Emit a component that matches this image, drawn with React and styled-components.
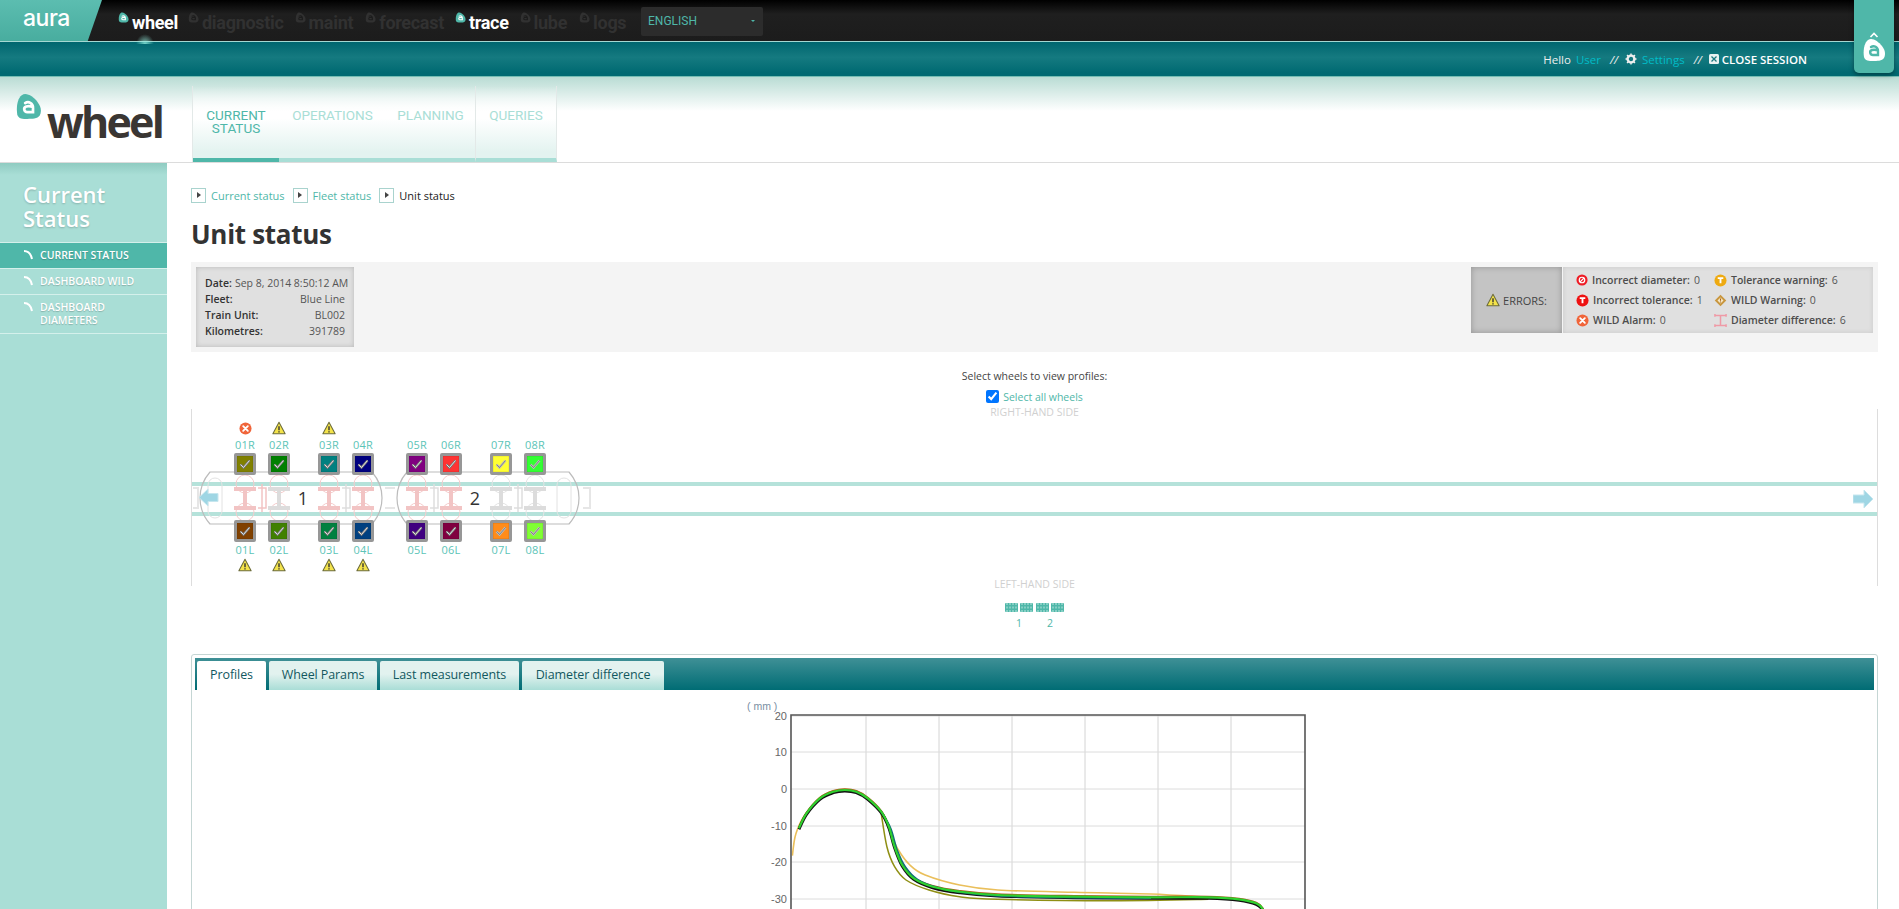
import React from 'react'
import styled, { createGlobalStyle } from 'styled-components'

const TEAL = '#4fb7a9'
const PALE = '#a9ded6'
const NARROW = '"Liberation Sans Narrow", Roboto, sans-serif'

const PRODUCTS = [
  { name: 'wheel', on: true, gap: 0 },
  { name: 'diagnostic', gap: 10 },
  { name: 'maint', gap: 11 },
  { name: 'forecast', gap: 12 },
  { name: 'trace', on: true, gap: 11 },
  { name: 'lube', gap: 11 },
  { name: 'logs', gap: 12 }
]

const TOP_WHEELS = [
  { id: '01R', color: '#808000', gap: 0, flag: 'alarm' },
  { id: '02R', color: '#008000', gap: 0, flag: 'warn' },
  { id: '03R', color: '#008080', gap: 16, flag: 'warn' },
  { id: '04R', color: '#000080', gap: 0 },
  { id: '05R', color: '#800080', gap: 20 },
  { id: '06R', color: '#ff3333', gap: 0 },
  { id: '07R', color: '#ffff33', gap: 16 },
  { id: '08R', color: '#33ff33', gap: 0 }
]

const BOTTOM_WHEELS = [
  { id: '01L', color: '#804000', gap: 0, flag: 'warn' },
  { id: '02L', color: '#408000', gap: 0, flag: 'warn' },
  { id: '03L', color: '#008040', gap: 16, flag: 'warn' },
  { id: '04L', color: '#004080', gap: 0, flag: 'warn' },
  { id: '05L', color: '#400080', gap: 20 },
  { id: '06L', color: '#800040', gap: 0 },
  { id: '07L', color: '#ff8c1a', gap: 16 },
  { id: '08L', color: '#80ff33', gap: 0 }
]

const AXLES = [
  { x: 245, bad: true },
  { x: 279, ring: true },
  { x: 329, bad: true },
  { x: 363, bad: true },
  { x: 417, bad: true },
  { x: 451, bad: true },
  { x: 501 },
  { x: 535 }
]

const GlobalStyle = createGlobalStyle`
  html, body {
    margin: 0;
    height: 100%;
    overflow: hidden;
    background: #fff;
    font-family: "Open Sans", "Liberation Sans", sans-serif;
    color: #333;
  }
  #root {
    height: 100%;
  }
`

const Page = styled.div`
  display: flex;
  flex-direction: column;
  height: 909px;
  overflow: hidden;
  position: relative;
`
const TopBar = styled.div`
  display: flex;
  align-items: stretch;
  height: 41px;
  background: linear-gradient(#000 0, #1f1f1f 14px, #1c1c1c 100%);
  border-bottom: 1px solid #a5d8d2;
  flex: none;
`
const AuraLogo = styled.div`
  width: 102px;
  background: linear-gradient(#5cbdb0, #48ad9f);
  clip-path: polygon(0 0, 100% 0, 86% 100%, 0 100%);
  color: #fff;
  font: 500 23px Inter, sans-serif;
  letter-spacing: -0.5px;
  padding: 4px 0 0 23px;
  box-sizing: border-box;
`
const Products = styled.nav`
  display: flex;
  align-items: flex-start;
  padding: 10px 0 0 16px;
  width: 539px;
  box-sizing: border-box;
`
const Product = styled.a`
  display: flex;
  margin-left: ${p => p.$gap}px;
  font: 700 18px/26px Roboto, sans-serif;
  letter-spacing: -0.3px;
  color: ${p => (p.$on ? '#fff' : '#313131')};
  position: relative;
  svg {
    margin: 2px 3px 0 0;
    color: ${p => (p.$on ? TEAL : '#313131')};
  }
`
const Glow = styled.span`
  position: absolute;
  left: 18px;
  bottom: -8px;
  width: 18px;
  height: 10px;
  background: radial-gradient(ellipse at bottom, rgba(150, 240, 225, 0.8), transparent 70%);
`
const Language = styled.div`
  width: 122px;
  height: 29px;
  margin-top: 7px;
  background: #2c2c2c;
  border-radius: 2px;
  color: ${TEAL};
  font: 12px/29px ${NARROW};
  padding-left: 7px;
  box-sizing: border-box;
  position: relative;
  &:after {
    content: '';
    position: absolute;
    right: 8px;
    top: 13px;
    border: 2.5px solid transparent;
    border-top-color: ${TEAL};
  }
`
const SessionBar = styled.div`
  display: flex;
  justify-content: flex-end;
  align-items: center;
  gap: 5px;
  height: 34px;
  flex: none;
  padding-right: 92px;
  background: linear-gradient(#00666f, #157a80 45%, #006a72 90%);
  border-bottom: 1px solid #74bdb3;
  color: #eee;
  font-size: 11.5px;
`
const UserLink = styled.span`
  color: #00bcc8;
`
const Separator = styled.span`
  font-style: italic;
  margin: 0 2px 0 4px;
`
const CloseLink = styled.span`
  display: flex;
  align-items: center;
  gap: 3px;
  color: #fff;
  font-weight: 600;
`
const Widget = styled.div`
  position: absolute;
  right: 5px;
  top: 0;
  width: 40px;
  height: 73px;
  background: ${TEAL};
  border-radius: 0 0 5px 5px;
  box-shadow: 0 2px 5px rgba(0, 0, 0, 0.4);
  display: flex;
  flex-direction: column;
  align-items: center;
  justify-content: flex-end;
  padding-bottom: 11px;
  box-sizing: border-box;
  color: #fff;
`
const Header = styled.header`
  display: flex;
  flex: none;
  height: 85px;
  box-sizing: content-box;
  background: linear-gradient(#b9dcd4 0, #fff 34px);
  border-bottom: 1px solid #dcdcdc;
`
const HeaderLogo = styled.div`
  width: 192px;
  flex: none;
  display: flex;
  padding: 16px 0 0 15px;
  box-sizing: border-box;
  color: ${TEAL};
`
const LogoWord = styled.span`
  color: #3a3633;
  font: 700 43px/48px "Open Sans", sans-serif;
  letter-spacing: -2.8px;
  margin: 5px 0 0 5px;
`
const Tabs = styled.div`
  display: flex;
  align-self: flex-end;
  height: 76px;
  border-left: 1px solid #e3e9e8;
`
const Tab = styled.div`
  width: ${p => p.$w}px;
  box-sizing: border-box;
  text-align: center;
  padding-top: 23px;
  font: 13.5px/13px ${NARROW};
  color: ${p => (p.$on ? TEAL : PALE)};
  background: linear-gradient(rgba(255, 255, 255, 0) 0, #fff 45%, #e3f3f0 92%);
  border-bottom: 4px solid ${p => (p.$on ? TEAL : PALE)};
  border-right: ${p => (p.$line ? '1px solid #e3e9e8' : '0')};
`
const Body = styled.div`
  display: flex;
  flex: 1;
  min-height: 0;
`
const Sidebar = styled.aside`
  width: 167px;
  flex: none;
  background: linear-gradient(#8fcbc1 0, ${PALE} 12px);
`
const SideTitle = styled.h2`
  margin: 0;
  padding: 19px 0 12px 23px;
  font: 600 22px/24px "Open Sans", sans-serif;
  color: #fff;
  text-shadow: 0 1px 2px rgba(0, 0, 0, 0.2);
`
const SideItem = styled.div`
  display: flex;
  gap: 7px;
  padding: 6px 4px 6px 23px;
  font: 600 10.5px/13px "Open Sans", sans-serif;
  color: #fff;
  text-transform: uppercase;
  text-shadow: 0 1px 1px rgba(0, 0, 0, 0.2);
  background: ${p => (p.$on ? TEAL : 'transparent')};
  border-top: ${p => (p.$first ? '1px solid #d4f0eb' : '0')};
  border-bottom: 1px solid #d4f0eb;
  svg {
    flex: none;
    margin-top: 1px;
  }
`
const Main = styled.main`
  flex: 1;
  min-width: 0;
  padding: 25px 21px 0 24px;
`
const Crumbs = styled.div`
  display: flex;
  align-items: center;
  height: 14px;
  font-size: 11px;
`
const CrumbBox = styled.span`
  width: 13px;
  height: 13px;
  border: 1px solid #a9d3ce;
  display: flex;
  align-items: center;
  justify-content: center;
  margin: 0 5px 0 ${p => (p.$first ? 0 : 8)}px;
  &:after {
    content: '';
    border: 3px solid transparent;
    border-left: 4px solid #444;
    border-right: 0;
  }
`
const Crumb = styled.span`
  color: ${p => (p.$current ? '#222' : TEAL)};
`
const Title = styled.h1`
  margin: 14px 0 10px;
  font: 700 26px/36px "Open Sans", sans-serif;
  color: #333;
  letter-spacing: -0.3px;
`
const StatusBand = styled.div`
  display: flex;
  justify-content: space-between;
  align-items: flex-start;
  height: 90px;
  padding: 5px;
  box-sizing: border-box;
  background: #f4f4f4;
`
const InfoBox = styled.div`
  width: 158px;
  height: 80px;
  box-sizing: border-box;
  padding: 8px 9px;
  background: #e0e0e0;
  box-shadow: inset 0 0 5px rgba(0, 0, 0, 0.18);
  font-size: 10.5px;
  line-height: 16px;
  color: #555;
`
const InfoRow = styled.div`
  display: flex;
  justify-content: ${p => (p.$tight ? 'flex-start' : 'space-between')};
  gap: 3px;
  white-space: nowrap;
  b {
    color: #333;
    font-weight: 600;
  }
`
const Errors = styled.div`
  display: flex;
  height: 66px;
`
const ErrorsLabel = styled.div`
  width: 91px;
  display: flex;
  align-items: center;
  justify-content: center;
  gap: 3px;
  background: #c4c4c4;
  box-shadow: inset 0 0 6px rgba(0, 0, 0, 0.25);
  font-size: 11px;
  color: #444;
  margin-right: 1px;
`
const ErrorGrid = styled.div`
  width: 310px;
  display: grid;
  grid-template-columns: 138px 1fr;
  grid-auto-rows: 20px;
  align-content: center;
  padding-left: 13px;
  box-sizing: border-box;
  background: #e0e0e0;
  box-shadow: inset 0 0 5px rgba(0, 0, 0, 0.1);
  font-size: 10.5px;
  color: #555;
`
const ErrorItem = styled.div`
  display: flex;
  align-items: center;
  gap: 4px;
  white-space: nowrap;
  span {
    font-weight: 600;
    color: #4d4d4d;
  }
`
const SelectNote = styled.div`
  margin-top: 16px;
  text-align: center;
  font-size: 10.5px;
  line-height: 16px;
  color: #444;
`
const SelectAll = styled.label`
  display: flex;
  justify-content: center;
  align-items: center;
  gap: 4px;
  margin-top: 5px;
  height: 15px;
  font-size: 10.5px;
  color: ${TEAL};
  input {
    width: 13px;
    height: 13px;
    margin: 0;
  }
`
const Stage = styled.section`
  position: relative;
  height: 177px;
  margin-top: 5px;
  padding-top: 11px;
  box-sizing: border-box;
  border-left: 1px solid #ddd;
  border-right: 1px solid #ddd;
`
const SideLabel = styled.div`
  position: absolute;
  left: 0;
  right: 0;
  top: ${p => p.$top}px;
  text-align: center;
  font-size: 10.5px;
  line-height: 14px;
  color: #d0d0d0;
`
const Rail = styled.div`
  position: absolute;
  left: 0;
  right: 0;
  top: ${p => p.$top}px;
  height: 4px;
  background: #b5e2da;
`
const TrainArt = styled.svg`
  position: absolute;
  left: 0;
  top: 56px;
`
const RightArrow = styled.svg`
  position: absolute;
  right: 4px;
  top: 81px;
`
const WheelRow = styled.div`
  position: relative;
  display: flex;
  padding-left: 36px;
`
const WheelCell = styled.div`
  width: 34px;
  margin-left: ${p => p.$gap}px;
  display: flex;
  flex-direction: ${p => (p.$bottom ? 'column-reverse' : 'column')};
  align-items: center;
`
const FlagSlot = styled.div`
  height: 16px;
  display: flex;
  align-items: center;
`
const WheelId = styled.div`
  font-size: 11px;
  line-height: ${p => (p.$bottom ? 15 : 17)}px;
  color: #5cc4b7;
  letter-spacing: 0.2px;
`
const WheelBox = styled.div`
  width: 22px;
  height: 22px;
  box-sizing: border-box;
  border: 3px solid #979797;
  border-radius: 2px;
  background: ${p => p.$color};
  display: flex;
  align-items: center;
  justify-content: center;
  margin: ${p => (p.$bottom ? 0 : '0 0 0 0')};
  box-shadow: inset 0 0 1px rgba(0, 0, 0, 0.5);
`
const TrainGap = styled.div`
  height: 45px;
`
const MiniTrains = styled.div`
  display: flex;
  justify-content: center;
  gap: 3px;
  margin-top: 17px;
`
const MiniTrain = styled.div`
  width: 28px;
  text-align: center;
  font-size: 10.5px;
  line-height: 14px;
  color: ${TEAL};
  svg {
    display: block;
    margin-bottom: 4px;
  }
`
const Panel = styled.section`
  margin-top: 24px;
  height: 300px;
  border: 1px solid #c5d6d4;
  border-radius: 3px 3px 0 0;
  padding: 3px;
`
const PanelTabs = styled.div`
  display: flex;
  align-items: flex-end;
  gap: 3px;
  height: 32px;
  padding-left: 2px;
  background: linear-gradient(#3f9096, #006c74);
`
const PanelTab = styled.div`
  height: 29px;
  box-sizing: border-box;
  width: ${p => p.$w}px;
  text-align: center;
  border-radius: 2px 2px 0 0;
  font-size: 12.5px;
  line-height: 28px;
  letter-spacing: -0.1px;
  color: #12585f;
  background: ${p => (p.$on ? '#fff' : 'linear-gradient(#e2f2ef 45%, #a9ddd6)')};
`
const ChartWrap = styled.div`
  display: flex;
  justify-content: center;
  padding-top: 10px;
`

const Blob = ({ size = 11, letter = '#fff', ...rest }) => (
  <svg width={size} height={size} viewBox='0 0 24 24' {...rest}>
    <path
      fill='currentColor'
      d='M6 2C10-1 16 3 20 8c3 4 4 8 2 12-2 3-7 3-11 3-4 0-8 0-9-4C1 13 2 5 6 2Z'
    />
    <path
      fill='none'
      stroke={letter}
      strokeWidth='2.4'
      strokeLinecap='round'
      d='M9 9c3-2 7 0 7 4v4h-5c-3 0-4-4-1-5 2-.5 4-.3 6 .5'
    />
  </svg>
)

const Arc = () => (
  <svg width='10' height='10' viewBox='0 0 10 10'>
    <path d='M1 1c4 0 7 3 8 8' fill='none' stroke='#fff' strokeWidth='2' />
  </svg>
)

const Warning = ({ size = 14 }) => (
  <svg width={size} height={size} viewBox='0 0 16 16'>
    <path d='M8 1.5 15 14.5H1Z' fill='#f4e34a' stroke='#6b6b3a' strokeWidth='1.2' strokeLinejoin='round' />
    <path d='M8 6v4.5M8 11.8v1.2' stroke='#333' strokeWidth='1.6' />
  </svg>
)

const Alarm = ({ size = 13 }) => (
  <svg width={size} height={size} viewBox='0 0 14 14'>
    <circle cx='7' cy='7' r='6.5' fill='#f0653a' />
    <path d='M4.5 4.5l5 5M9.5 4.5l-5 5' stroke='#fff' strokeWidth='2' strokeLinecap='round' />
  </svg>
)

const NoEntry = () => (
  <svg width='12' height='12' viewBox='0 0 14 14'>
    <circle cx='7' cy='7' r='6.5' fill='#ee1c25' />
    <circle cx='7' cy='7' r='3.2' fill='none' stroke='#fff' strokeWidth='1.4' />
    <path d='M4.8 9.2l4.4-4.4' stroke='#fff' strokeWidth='1.4' />
  </svg>
)

const TMark = ({ color }) => (
  <svg width='13' height='13' viewBox='0 0 14 14'>
    <circle cx='7' cy='7' r='6.5' fill={color} />
    <path d='M4 4.5h6M7 4.5v5.5' stroke='#fff' strokeWidth='2' />
  </svg>
)

const Diamond = () => (
  <svg width='13' height='13' viewBox='0 0 14 14'>
    <path d='M7 .8 13.2 7 7 13.2.8 7Z' fill='#c8963e' />
    <path d='M7 3.8 10.2 7 7 10.2 3.8 7Z' fill='#f7e9c8' />
    <path d='M7 4.8v2.6M7 8.2v1' stroke='#a8641a' strokeWidth='1.2' />
  </svg>
)

const Beam = () => (
  <svg width='13' height='13' viewBox='0 0 14 14'>
    <path d='M1 1.5h12M1 12.5h12M7 1.5v11M1 0v3M13 0v3M1 11v3M13 11v3' stroke='#ef9aa6' strokeWidth='1.6' fill='none' />
  </svg>
)

const Check = ({ dark }) => (
  <svg width='12' height='12' viewBox='0 0 12 12'>
    <path d='M1.5 6.5 4.5 9.5 10.5 2.5' fill='none' stroke={dark ? '#777' : '#bbb'} strokeWidth='2.4' />
    <path d='M1.5 6.5 4.5 9.5 10.5 2.5' fill='none' stroke={dark ? '#eee' : '#111'} strokeOpacity={dark ? 1 : 0.35} strokeWidth='0.9' />
  </svg>
)

const Wheel = ({ wheel, bottom }) => {
  const light = ['#ffff33', '#33ff33', '#ff8c1a', '#80ff33'].includes(wheel.color)
  return (
    <WheelCell $gap={wheel.gap} $bottom={bottom}>
      <FlagSlot>
        {wheel.flag === 'alarm' ? <Alarm /> : null}
        {wheel.flag === 'warn' ? <Warning /> : null}
      </FlagSlot>
      <WheelId $bottom={bottom}>{wheel.id}</WheelId>
      <WheelBox $color={wheel.color}>
        <Check dark={!light} />
      </WheelBox>
    </WheelCell>
  )
}

const Bogie = ({ x, bad, ring }) => {
  const line = bad ? '#f2c4c4' : '#dcdcdc'
  const wheelLine = bad || ring ? '#f5cccc' : '#e4e4e4'
  return (
    <g>
      <circle cx={x} cy='484' r='9' fill='none' stroke={wheelLine} />
      <circle cx={x} cy='512' r='9' fill='none' stroke={wheelLine} />
      <path d={`M${x - 11} 489h22M${x - 11} 508h22`} stroke={line} strokeWidth='4' />
      <path d={`M${x} 489v19`} stroke={line} strokeWidth='4' />
    </g>
  )
}

const carPath = (a, b) =>
  `M${a + 10} 472H${b - 10}C${b - 3} 480 ${b} 490 ${b} 498C${b} 506 ${b - 3} 516 ${b - 10} 524H${a + 10}C${a + 3} 516 ${a} 506 ${a} 498C${a} 490 ${a + 3} 480 ${a + 10} 472Z`

const Train = () => (
  <TrainArt width='420' height='70' viewBox='192 465 420 70'>
    <path d={carPath(200, 382)} fill='none' stroke='#bcbcbc' strokeWidth='1.2' />
    <path d={carPath(397, 579)} fill='none' stroke='#bcbcbc' strokeWidth='1.2' />
    <rect x='208' y='478' width='14' height='40' rx='7' fill='none' stroke='#e2e2e2' />
    <rect x='557' y='478' width='14' height='40' rx='7' fill='none' stroke='#e2e2e2' />
    <path d='M193 488h5v20h-5M385 488h10M385 508h10M583 488h7v20h-7' fill='none' stroke='#e6e6e6' strokeWidth='2' />
    {AXLES.map(a => (
      <Bogie key={a.x} {...a} />
    ))}
    <path d='M258 488h8v20h-8M262 484v28' fill='none' stroke='#f2c4c4' strokeWidth='1.5' />
    <path d='M342 488h8v20h-8M346 484v28M430 488h8v20h-8M434 484v28M514 488h8v20h-8M518 484v28' fill='none' stroke='#dedede' strokeWidth='1.5' />
    <path d='M199 497.5 208 489v4.5h10v8h-10v4.5Z' fill='#9fd6e4' stroke='#c6e6ee' />
    <text x='303' y='505' fontSize='18' fontFamily='Open Sans' fill='#333' textAnchor='middle'>1</text>
    <text x='475' y='505' fontSize='18' fontFamily='Open Sans' fill='#333' textAnchor='middle'>2</text>
  </TrainArt>
)

const MiniIcon = () => (
  <svg width='28' height='9' viewBox='0 0 28 9'>
    <rect x='0' y='0' width='13' height='9' rx='1' fill='#4fb7a9' />
    <rect x='15' y='0' width='13' height='9' rx='1' fill='#4fb7a9' />
    <path d='M2 0v9M5 0v9M8 0v9M11 0v9M17 0v9M20 0v9M23 0v9M26 0v9' stroke='#d9f2ee' strokeDasharray='2 1.5' strokeWidth='0.8' />
  </svg>
)

// zoom-measured curve points, turned into page coordinates
const toPage = ([x, y]) => [730 + x / 2.613, 690 + y / 3]

const smooth = pts => {
  const p = pts.map(toPage)
  let d = `M${p[0][0].toFixed(1)} ${p[0][1].toFixed(1)}`
  for (let i = 0; i < p.length - 1; i++) {
    const a = p[i - 1] || p[i]
    const b = p[i]
    const c = p[i + 1]
    const e = p[i + 2] || c
    const c1 = [b[0] + (c[0] - a[0]) / 6, b[1] + (c[1] - a[1]) / 6]
    const c2 = [c[0] - (e[0] - b[0]) / 6, c[1] - (e[1] - b[1]) / 6]
    d += `C${c1[0].toFixed(1)} ${c1[1].toFixed(1)} ${c2[0].toFixed(1)} ${c2[1].toFixed(1)} ${c[0].toFixed(1)} ${c[1].toFixed(1)}`
  }
  return d
}

const NOSE = [[180, 415], [200, 370], [235, 325], [270, 305], [300, 300], [330, 305], [360, 325], [395, 365]]
const TAIL = [[1100, 622], [1250, 622], [1330, 628], [1375, 640], [1392, 657], [1400, 690]]
const MAIN = [...NOSE, [415, 410], [430, 470], [450, 525], [480, 565], [530, 590], [600, 605], [700, 615], [900, 620], ...TAIL]
const YELLOW = [[163, 497], [170, 440], [185, 395], [200, 368], [235, 323], [270, 303], [300, 298], [330, 303], [360, 323], [395, 365], [420, 430], [440, 480], [470, 525], [510, 555], [600, 585], [700, 600], [900, 607], [1100, 612], [1250, 622]]
const OLIVE = [[395, 370], [410, 470], [430, 530], [460, 570], [520, 600], [600, 620], [700, 628], [1000, 632], [1250, 628]]
const TEALINE = [[395, 365], [420, 415], [437, 480], [458, 530], [490, 568], [540, 592], [600, 607], [700, 618], [900, 623], [1100, 625]]

const shift = (pts, dy) => pts.map(([x, y]) => [x, y + dy])

const VERTICALS = [866, 939, 1012, 1085, 1158, 1231]
const HORIZONTALS = [
  { y: 716, label: '20' },
  { y: 752, label: '10' },
  { y: 789, label: '0' },
  { y: 826, label: '-10' },
  { y: 862, label: '-20' },
  { y: 899, label: '-30' }
]

const ProfileChart = () => (
  <svg width='601' height='280' viewBox='734 700 601 280'>
    <text x='747' y='710' fontSize='10.5' fontFamily='Liberation Sans' fill='#7a8fa3'>( mm )</text>
    {VERTICALS.map(x => (
      <path key={x} d={`M${x} 715V980`} stroke='#d4d4d4' strokeWidth='1' />
    ))}
    {HORIZONTALS.map(h => (
      <g key={h.y}>
        <path d={`M791 ${h.y}H1305`} stroke='#dcdcdc' strokeWidth='1' />
        <text x='787' y={h.y + 4} fontSize='11' fontFamily='Liberation Sans' fill='#666' textAnchor='end'>{h.label}</text>
      </g>
    ))}
    <path d={smooth(YELLOW)} fill='none' stroke='#eabf5b' strokeWidth='1.6' />
    <path d={smooth(OLIVE)} fill='none' stroke='#8f8f14' strokeWidth='1.5' />
    <path d={smooth(shift(MAIN, -2))} fill='none' stroke='#a8601e' strokeWidth='2' />
    <path d={smooth(shift(MAIN, 3))} fill='none' stroke='#111' strokeWidth='3' />
    <path d={smooth(TEALINE)} fill='none' stroke='#0e6f78' strokeWidth='1.6' />
    <path d={smooth(MAIN)} fill='none' stroke='#2fd02f' strokeWidth='2.2' />
    <path d='M791 715H1305V980H791Z' fill='none' stroke='#555' strokeWidth='1.6' />
  </svg>
)

const App = () => (
  <Page>
    <GlobalStyle />
    <TopBar>
      <AuraLogo>aura</AuraLogo>
      <Products>
        {PRODUCTS.map(p => (
          <Product key={p.name} $on={p.on} $gap={p.gap}>
            <Blob size={11} letter={p.on ? '#fff' : '#1c1c1c'} />
            {p.name}
            {p.name === 'wheel' ? <Glow /> : null}
          </Product>
        ))}
      </Products>
      <Language>ENGLISH</Language>
    </TopBar>
    <SessionBar>
      <span>Hello</span>
      <UserLink>User</UserLink>
      <Separator>//</Separator>
      <svg width='12' height='12' viewBox='0 0 12 12'>
        <circle cx='6' cy='6' r='3.4' fill='none' stroke='#eee' strokeWidth='2.4' />
        <path d='M6 .5v2M6 9.5v2M.5 6h2M9.5 6h2M2 2l1.5 1.5M8.5 8.5 10 10M10 2 8.5 3.500M3.500 8.500 2 10' stroke='#eee' strokeWidth='1.4' />
      </svg>
      <UserLink>Settings</UserLink>
      <Separator>//</Separator>
      <CloseLink>
        <svg width='10' height='10' viewBox='0 0 10 10'>
          <rect width='10' height='10' rx='1.500' fill='#e8f2f2' />
          <path d='M2.500 2.500l5 5M7.500 2.500l-5 5' stroke='#1b7a80' strokeWidth='1.300' />
        </svg>
        CLOSE SESSION
      </CloseLink>
    </SessionBar>
    <Widget>
      <svg width='10' height='6' viewBox='0 0 10 6'>
        <path d='M1.500 5 5 1.500 8.500 5' fill='none' stroke='#fff' strokeWidth='1.600' />
      </svg>
      <Blob size={24} letter='#4fb7a9' />
    </Widget>
    <Header>
      <HeaderLogo>
        <Blob size={27} />
        <LogoWord>wheel</LogoWord>
      </HeaderLogo>
      <Tabs>
        <Tab $on $w={86}>CURRENT STATUS</Tab>
        <Tab $w={107}>OPERATIONS</Tab>
        <Tab $w={90} $line>PLANNING</Tab>
        <Tab $w={81} $line>QUERIES</Tab>
      </Tabs>
    </Header>
    <Body>
      <Sidebar>
        <SideTitle>
          Current
          <br />
          Status
        </SideTitle>
        <SideItem $on $first>
          <Arc />
          Current status
        </SideItem>
        <SideItem>
          <Arc />
          Dashboard wild
        </SideItem>
        <SideItem>
          <Arc />
          Dashboard diameters
        </SideItem>
      </Sidebar>
      <Main>
        <Crumbs>
          <CrumbBox $first />
          <Crumb>Current status</Crumb>
          <CrumbBox />
          <Crumb>Fleet status</Crumb>
          <CrumbBox />
          <Crumb $current>Unit status</Crumb>
        </Crumbs>
        <Title>Unit status</Title>
        <StatusBand>
          <InfoBox>
            <InfoRow $tight><b>Date:</b> Sep 8, 2014 8:50:12 AM</InfoRow>
            <InfoRow><b>Fleet:</b> Blue Line</InfoRow>
            <InfoRow><b>Train Unit:</b> BL002</InfoRow>
            <InfoRow><b>Kilometres:</b> 391789</InfoRow>
          </InfoBox>
          <Errors>
            <ErrorsLabel>
              <Warning />
              ERRORS:
            </ErrorsLabel>
            <ErrorGrid>
              <ErrorItem><NoEntry /><span>Incorrect diameter:</span> 0</ErrorItem>
              <ErrorItem><TMark color='#eeaa11' /><span>Tolerance warning:</span> 6</ErrorItem>
              <ErrorItem><TMark color='#ee1111' /><span>Incorrect tolerance:</span> 1</ErrorItem>
              <ErrorItem><Diamond /><span>WILD Warning:</span> 0</ErrorItem>
              <ErrorItem><Alarm /><span>WILD Alarm:</span> 0</ErrorItem>
              <ErrorItem><Beam /><span>Diameter difference:</span> 6</ErrorItem>
            </ErrorGrid>
          </Errors>
        </StatusBand>
        <SelectNote>Select wheels to view profiles:</SelectNote>
        <SelectAll>
          <input type='checkbox' defaultChecked />
          Select all wheels
        </SelectAll>
        <Stage>
          <SideLabel $top={-4}>RIGHT-HAND SIDE</SideLabel>
          <Rail $top={73} />
          <Rail $top={103} />
          <Train />
          <RightArrow width='20' height='18' viewBox='0 0 20 18'>
            <path d='M20 9 11 0v5H0v8h11v5Z' fill='#9fd6e4' stroke='#c6e6ee' />
          </RightArrow>
          <WheelRow>
            {TOP_WHEELS.map(w => (
              <Wheel key={w.id} wheel={w} />
            ))}
          </WheelRow>
          <TrainGap />
          <WheelRow>
            {BOTTOM_WHEELS.map(w => (
              <Wheel key={w.id} wheel={w} bottom />
            ))}
          </WheelRow>
          <SideLabel $top={168}>LEFT-HAND SIDE</SideLabel>
        </Stage>
        <MiniTrains>
          <MiniTrain>
            <MiniIcon />
            1
          </MiniTrain>
          <MiniTrain>
            <MiniIcon />
            2
          </MiniTrain>
        </MiniTrains>
        <Panel>
          <PanelTabs>
            <PanelTab $on $w={69}>Profiles</PanelTab>
            <PanelTab $w={108}>Wheel Params</PanelTab>
            <PanelTab $w={139}>Last measurements</PanelTab>
            <PanelTab $w={142}>Diameter difference</PanelTab>
          </PanelTabs>
          <ChartWrap>
            <ProfileChart />
          </ChartWrap>
        </Panel>
      </Main>
    </Body>
  </Page>
)

export default App
